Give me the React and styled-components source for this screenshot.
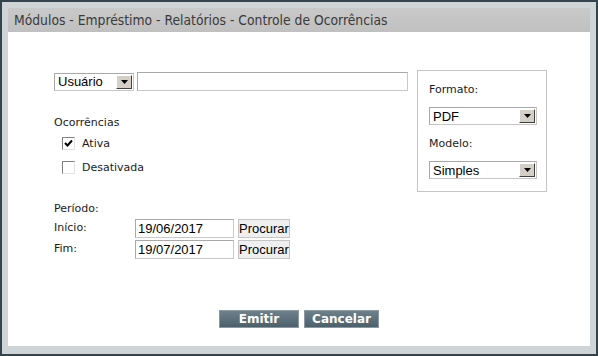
import React from 'react'
import styled, { createGlobalStyle } from 'styled-components'

const GlobalStyle = createGlobalStyle`
    html, body {
        margin: 0;
        padding: 0;
        background: #ffffff;
    }
    * {
        box-sizing: border-box;
    }
`

function Arrow() {
    return (
        <svg width="7" height="4" viewBox="0 0 7 4">
            <polygon points="0,0 7,0 3.5,4" fill="#000" />
        </svg>
    )
}

function Select({ value, width }) {
    return (
        <SelectBox width={width}>
            <SelectText>{value}</SelectText>
            <DropButton>
                <Arrow />
            </DropButton>
        </SelectBox>
    )
}

function Check({ checked, label }) {
    return (
        <CheckRow>
            <Box>
                {checked && (
                    <svg width="9" height="9" viewBox="0 0 9 9">
                        <polyline points="1,4 3.5,6.5 8,1.5" fill="none" stroke="#000" strokeWidth="2" />
                    </svg>
                )}
            </Box>
            <Label>{label}</Label>
        </CheckRow>
    )
}

function App() {
    return (
        <Window>
            <GlobalStyle />
            <TitleBar>Módulos - Empréstimo - Relatórios - Controle de Ocorrências</TitleBar>
            <Content>
                <Main>
                    <LeftColumn>
                        <SearchRow>
                            <Select value="Usuário" width={80} />
                            <TextInput width={271} />
                        </SearchRow>

                        <SectionLabel>Ocorrências</SectionLabel>
                        <Check checked label="Ativa" />
                        <Check label="Desativada" />

                        <PeriodLabel>Período:</PeriodLabel>
                        <DateRow>
                            <DateLabel>Início:</DateLabel>
                            <TextInput width={99} value="19/06/2017" readOnly />
                            <SmallButton>Procurar</SmallButton>
                        </DateRow>
                        <DateRow>
                            <DateLabel>Fim:</DateLabel>
                            <TextInput width={99} value="19/07/2017" readOnly />
                            <SmallButton>Procurar</SmallButton>
                        </DateRow>
                    </LeftColumn>

                    <FormatPanel>
                        <PanelLabel>Formato:</PanelLabel>
                        <Select value="PDF" width={108} />
                        <PanelLabel>Modelo:</PanelLabel>
                        <Select value="Simples" width={108} />
                    </FormatPanel>
                </Main>

                <Actions>
                    <ActionButton width={80}>Emitir</ActionButton>
                    <ActionButton width={75}>Cancelar</ActionButton>
                </Actions>
            </Content>
        </Window>
    )
}

export default App

const Window = styled.div`
    width: 598px;
    height: 356px;
    border: 2px solid #34444c;
    background: #cfd4d6;
    padding: 6px 6px 8px 6px;
    display: flex;
    flex-direction: column;
`

const TitleBar = styled.div`
    height: 24px;
    background: linear-gradient(#c9c9c9, #c0c0c0);
    color: #3a3a3a;
    font-family: 'DejaVu Sans Condensed', 'DejaVu Sans', sans-serif;
    font-size: 13.75px;
    line-height: 24px;
    padding-left: 6px;
`

const Content = styled.div`
    flex: 1;
    background: #ffffff;
    padding: 40px 0 0 46px;
    display: flex;
    flex-direction: column;
`

const Main = styled.div`
    display: flex;
    align-items: flex-start;
`

const LeftColumn = styled.div`
    width: 355px;
    display: flex;
    flex-direction: column;
`

const SearchRow = styled.div`
    display: flex;
    gap: 3px;
    align-items: center;
    height: 19px;
`

const SelectBox = styled.div`
    width: ${p => p.width}px;
    height: 18px;
    display: flex;
    align-items: center;
    justify-content: space-between;
    background: #fff;
    border: 1px solid #c6c6c6;
    border-top-color: #a8a8a8;
    border-left-color: #a8a8a8;
    padding: 0 1px 0 3px;
`

const SelectText = styled.span`
    font-family: 'Liberation Sans', Arial, sans-serif;
    font-size: 13px;
    color: #000;
`

const DropButton = styled.div`
    width: 16px;
    height: 14px;
    background: #d4d0c8;
    border: 1px solid;
    border-color: #ffffff #404040 #404040 #ffffff;
    display: flex;
    align-items: center;
    justify-content: center;
`

const TextInput = styled.input`
    width: ${p => p.width}px;
    height: 19px;
    border: 1px solid #c8c8c8;
    border-top-color: #a9a9a9;
    border-left-color: #a9a9a9;
    padding: 0 2px;
    font-family: 'Liberation Sans', Arial, sans-serif;
    font-size: 13px;
    color: #000;
    outline: none;
`

const Label = styled.span`
    font-family: 'DejaVu Sans', Verdana, sans-serif;
    font-size: 11px;
    color: #1a1a1a;
`

const SectionLabel = styled(Label)`
    margin-top: 24px;
    height: 16px;
    line-height: 16px;
`

const CheckRow = styled.div`
    display: flex;
    align-items: center;
    gap: 7px;
    height: 23px;
    padding-left: 8px;
    margin-top: 1px;
`

const Box = styled.div`
    width: 13px;
    height: 13px;
    border: 1px solid;
    border-color: #808080 #e4e4e4 #e4e4e4 #808080;
    background: #fff;
    display: flex;
    align-items: center;
    justify-content: center;
`

const PeriodLabel = styled(Label)`
    margin-top: 22px;
    height: 16px;
    line-height: 16px;
`

const DateRow = styled.div`
    display: flex;
    align-items: center;
    gap: 4px;
    height: 19px;
    margin-top: 2px;
`

const DateLabel = styled(Label)`
    width: 77px;
    margin-top: -3px;
`

const SmallButton = styled.button`
    width: 52px;
    height: 19px;
    padding: 0;
    background: #efefef;
    border: 1px solid #c4c4c4;
    font-family: 'Liberation Sans', Arial, sans-serif;
    font-size: 13px;
    color: #000;
`

const FormatPanel = styled.div`
    margin-top: -2px;
    margin-left: 8px;
    width: 130px;
    height: 122px;
    border: 1px solid #c4c4c4;
    padding: 0 0 0 11px;
    display: flex;
    flex-direction: column;
`

const PanelLabel = styled(Label)`
    height: 18px;
    line-height: 18px;
    margin: 10px 0 8px;
`

const Actions = styled.div`
    margin: auto 0 18px -46px;
    display: flex;
    justify-content: center;
    gap: 5px;
`

const ActionButton = styled.button`
    width: ${p => p.width}px;
    height: 18px;
    padding: 0;
    border: 1px solid #8a9aa2;
    background: linear-gradient(#6e818b, #4c606b);
    color: #ffffff;
    font-family: 'DejaVu Sans', Verdana, sans-serif;
    font-weight: bold;
    font-size: 12px;
    line-height: 16px;
`
